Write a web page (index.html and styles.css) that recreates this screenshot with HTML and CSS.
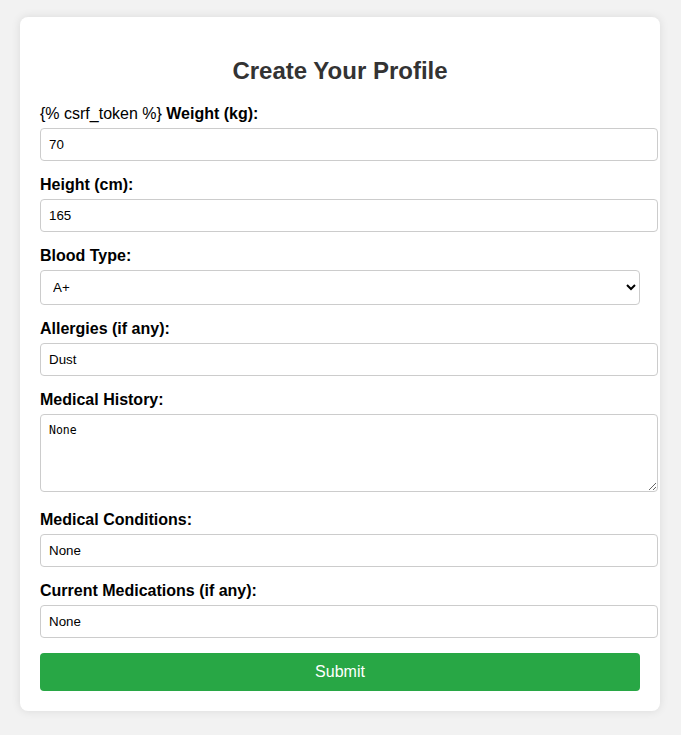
FILE: index.html
```html
<!DOCTYPE html>
<html>
<head>
<meta charset="utf-8">
<title>Create Your Profile</title>
<link rel="stylesheet" href="styles.css">
</head>
<body>
<div class="card">
  <h2 class="title">Create Your Profile</h2>
  <form class="form">
    <div class="label-line">{% csrf_token %} <label class="label" for="weight">Weight (kg):</label></div>
    <input class="field" id="weight" type="text" value="70">

    <label class="label block" for="height">Height (cm):</label>
    <input class="field" id="height" type="text" value="165">

    <label class="label block" for="blood">Blood Type:</label>
    <select class="select" id="blood">
      <option>A+</option>
      <option>A-</option>
      <option>B+</option>
      <option>B-</option>
      <option>AB+</option>
      <option>AB-</option>
      <option>O+</option>
      <option>O-</option>
    </select>

    <label class="label block" for="allergies">Allergies (if any):</label>
    <input class="field" id="allergies" type="text" value="Dust">

    <label class="label block" for="history">Medical History:</label>
    <textarea class="area" id="history">None</textarea>

    <label class="label block" for="conditions">Medical Conditions:</label>
    <input class="field" id="conditions" type="text" value="None">

    <label class="label block" for="meds">Current Medications (if any):</label>
    <input class="field" id="meds" type="text" value="None">

    <button class="submit" type="submit">Submit</button>
  </form>
</div>
</body>
</html>
```
FILE: styles.css
```css
html, body {
  margin: 0;
  padding: 0;
}
body {
  background: #f2f2f2;
  font-family: "Liberation Sans", Arial, sans-serif;
  padding-top: 17px;
  padding-bottom: 24px;
}
.card {
  width: 600px;
  margin: 0 auto;
  padding: 20px;
  background: #fff;
  border-radius: 8px;
  box-shadow: 0 0 10px rgba(0, 0, 0, 0.1);
  position: relative;
  left: -0.5px;
}
.title {
  margin: 20px 0 20px;
  text-align: center;
  font-size: 24px;
  line-height: 28px;
  color: #333;
  font-weight: bold;
}
.form {
  display: block;
}
.label-line {
  font-size: 16px;
  line-height: 18px;
  color: #000;
  margin-bottom: 5px;
}
.label {
  font-weight: bold;
  font-size: 16px;
  line-height: 18px;
  color: #000;
}
.block {
  display: block;
  margin-bottom: 5px;
}
.field {
  display: block;
  width: 600px;
  height: 15px;
  padding: 8px;
  margin: 0 0 15px;
  border: 1px solid #ccc;
  border-radius: 4px;
  font-family: "Liberation Sans", Arial, sans-serif;
  font-size: 13.33px;
  color: #000;
  background: #fff;
  box-sizing: content-box;
}
.select {
  display: block;
  width: 600px;
  height: 35px;
  padding: 0 4px 0 8px;
  margin: 0 0 15px;
  border: 1px solid #ccc;
  border-radius: 4px;
  font-family: "Liberation Sans", Arial, sans-serif;
  font-size: 13.33px;
  color: #000;
  background: #fff;
  box-sizing: border-box;
}
.area {
  display: block;
  width: 600px;
  height: 60px;
  padding: 8px;
  margin: 0 0 19px;
  border: 1px solid #ccc;
  border-radius: 4px;
  font-family: "DejaVu Sans Mono", monospace;
  font-size: 11.5px;
  color: #000;
  background: #fff;
  box-sizing: content-box;
  resize: both;
}
.submit {
  display: block;
  width: 600px;
  height: 38px;
  padding: 0;
  margin: 0;
  border: none;
  border-radius: 4px;
  background: #28a745;
  color: #fff;
  font-family: "Liberation Sans", Arial, sans-serif;
  font-size: 16px;
  cursor: pointer;
}
```
